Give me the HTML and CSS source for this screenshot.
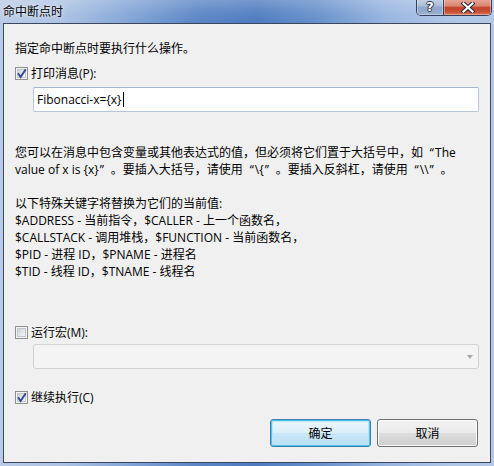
FILE: index.html
```html
<!DOCTYPE html>
<html lang="zh-CN">
<head>
<meta charset="utf-8">
<title>命中断点时</title>
<link rel="stylesheet" href="styles.css">
</head>
<body>
<div class="window">
  <div class="titlebar">
    <span class="title">命中断点时</span>
    <div class="caption-btns">
      <div class="cbtn help"><span class="qmark">?</span></div>
      <div class="cbtn close">
        <svg width="14" height="11" viewBox="0 0 14 11">
          <path d="M2.5 1.5 L11.5 9.5 M11.5 1.5 L2.5 9.5" stroke="#23283a" stroke-width="4.2" stroke-linecap="square" fill="none"/>
          <path d="M2.5 1.5 L11.5 9.5 M11.5 1.5 L2.5 9.5" stroke="#ffffff" stroke-width="2.2" stroke-linecap="square" fill="none"/>
        </svg>
      </div>
    </div>
  </div>
  <div class="client">
    <p class="intro">指定命中断点时要执行什么操作。</p>
    <div class="check-row row-print">
      <span class="cb checked"><svg viewBox="0 0 13 13" width="13" height="13"><path d="M3 6.3 L5.6 10 L10.8 2.2" stroke="#34489a" stroke-width="1.9" fill="none"/></svg></span>
      <span class="check-label">打印消息(P):</span>
    </div>
    <div class="textbox">Fibonacci-x={x}<span class="caret"></span></div>
    <p class="help-text">您可以在消息中包含变量或其他表达式的值，但必须将它们置于大括号中，如<span class="qo">“</span>The<br>value of x is {x}<span class="qc">”</span>。要插入大括号，请使用<span class="qo">“</span>\{<span class="qc">”</span>。要插入反斜杠，请使用<span class="qo">“</span>\\<span class="qc">”</span>。<br><br>以下特殊关键字将替换为它们的当前值:<br>$ADDRESS - 当前指令，$CALLER - 上一个函数名，<br>$CALLSTACK - 调用堆栈，$FUNCTION - 当前函数名，<br>$PID - 进程 ID，$PNAME - 进程名<br>$TID - 线程 ID，$TNAME - 线程名</p>
    <div class="check-row row-macro">
      <span class="cb"></span>
      <span class="check-label">运行宏(M):</span>
    </div>
    <div class="combo"><span class="arrow"></span></div>
    <div class="check-row row-continue">
      <span class="cb checked"><svg viewBox="0 0 13 13" width="13" height="13"><path d="M3 6.3 L5.6 10 L10.8 2.2" stroke="#34489a" stroke-width="1.9" fill="none"/></svg></span>
      <span class="check-label">继续执行(C)</span>
    </div>
    <div class="buttons">
      <button class="btn default">确定</button>
      <button class="btn">取消</button>
    </div>
  </div>
</div>
</body>
</html>
```
FILE: styles.css
```css
html, body {
  margin: 0;
  padding: 0;
}
body {
  width: 494px;
  height: 466px;
  overflow: hidden;
  font-family: "Segoe UI", "Open Sans", "Noto Sans CJK SC", sans-serif;
  font-size: 12px;
  color: #000;
}
.window {
  width: 494px;
  height: 466px;
  box-sizing: border-box;
  padding: 0 3px 3px 3px;
  display: flex;
  flex-direction: column;
  background:
    linear-gradient(180deg, rgba(255,255,255,0.22) 0px, rgba(255,255,255,0.05) 14px, rgba(255,255,255,0) 23px),
    linear-gradient(90deg, #b9cbe6 0%, #aec3e3 12%, #86a7d8 25%, #5b85c5 40%, #4f7bc0 52%, #6690ca 64%, #97b4df 78%, #aec5e6 90%, #b3c8e7 100%);
}
.titlebar {
  height: 23px;
  flex: none;
  display: flex;
  align-items: flex-start;
}
.title {
  margin-top: 2px;
  line-height: 17px;
  font-family: "Noto Sans CJK SC", sans-serif;
  text-shadow: 0 0 6px rgba(255,255,255,0.7), 0 0 2px rgba(255,255,255,0.6);
}
.caption-btns {
  margin-left: auto;
  margin-right: -1px;
  display: flex;
  height: 16px;
  margin-top: -1px;
  border: 1px solid #34405a;
  border-top: none;
  border-radius: 0 0 5px 5px;
  overflow: hidden;
}
.cbtn {
  height: 16px;
  box-sizing: border-box;
  display: flex;
  align-items: center;
  justify-content: center;
  box-shadow: inset 0 0 0 1px rgba(255,255,255,0.35);
}
.help {
  width: 27px;
  border-right: 1px solid #34405a;
  background: linear-gradient(180deg, #c6d3e7 0%, #aabbd6 45%, #8ea5c8 50%, #9ab0d1 100%);
}
.close {
  width: 47px;
  background: linear-gradient(180deg, #e7a99a 0%, #d98571 45%, #c6462f 50%, #c54a31 75%, #d8765c 100%);
}
.qmark {
  font-family: "DejaVu Sans", sans-serif;
  font-weight: bold;
  font-size: 13px;
  line-height: 13px;
  color: #fff;
  margin-top: -1px;
  text-shadow: 1px 0 0 #2a3048, -1px 0 0 #2a3048, 0 1px 0 #2a3048, 0 -1px 0 #2a3048;
}
.client {
  flex: 1;
  box-sizing: border-box;
  border: 1px solid #3a475f;
  background: #f0f0f0;
  padding: 16px 11px 0 11px;
  display: flex;
  flex-direction: column;
}
.intro {
  margin: 0;
  line-height: 17px;
}
.check-row {
  display: flex;
  align-items: center;
  height: 17px;
}
.row-print { margin-top: 8px; }
.row-macro { margin-top: 44px; }
.row-continue { margin-top: 20px; }
.cb {
  width: 13px;
  height: 13px;
  box-sizing: border-box;
  border: 1px solid #8e8f8f;
  background: #f4f4f4;
  position: relative;
  flex: none;
}
.cb::before {
  content: "";
  position: absolute;
  left: 1px;
  top: 1px;
  right: 1px;
  bottom: 1px;
  border: 1px solid #c3c6ca;
  background: linear-gradient(135deg, #cdd1d6 0%, #e4e6e8 55%, #f7f7f7 100%);
}
.cb svg {
  position: absolute;
  left: -1px;
  top: -1px;
}
.check-label {
  margin-left: 3px;
  line-height: 17px;
}
.textbox {
  margin: 5px 0 0 18px;
  height: 25px;
  box-sizing: border-box;
  background: #fff;
  border: 1px solid #b5c6da;
  border-top-color: #a3b3c8;
  border-radius: 2px;
  padding-left: 3px;
  display: flex;
  align-items: center;
  line-height: 17px;
}
.caret {
  display: inline-block;
  width: 1px;
  height: 15px;
  background: #000;
  margin-left: 1px;
}
.help-text {
  margin: 32px 0 0 0;
  line-height: 17px;
  white-space: nowrap;
}
.qo, .qc {
  display: inline-block;
  width: 12px;
  font-family: "Open Sans", sans-serif;
}
.qo {
  text-align: right;
  padding-right: 1px;
  box-sizing: border-box;
}
.qc {
  text-align: left;
  padding-left: 1px;
  box-sizing: border-box;
}
.combo {
  margin: 3px 0 0 18px;
  height: 25px;
  box-sizing: border-box;
  background: #f4f4f4;
  border: 1px solid #d3d3d3;
  border-radius: 3px;
  display: flex;
  align-items: center;
  justify-content: flex-end;
  padding-right: 5px;
}
.arrow {
  width: 0;
  height: 0;
  border-left: 3.5px solid transparent;
  border-right: 3.5px solid transparent;
  border-top: 4px solid #a8a8a8;
  margin-top: 1px;
}
.buttons {
  margin-top: 13px;
  margin-right: 1px;
  display: flex;
  justify-content: flex-end;
  gap: 6px;
}
.btn {
  width: 101px;
  height: 28px;
  box-sizing: border-box;
  font-family: "Segoe UI", "Open Sans", "Noto Sans CJK SC", sans-serif;
  font-size: 12px;
  color: #000;
  border: 1px solid #707070;
  border-radius: 3px;
  background: linear-gradient(180deg, #f2f2f2 0%, #ebebeb 50%, #dddddd 50%, #cfcfcf 100%);
  box-shadow: inset 0 0 0 1px #fbfbfb;
  padding: 0;
  margin: 0;
}
.btn.default {
  border-color: #3c7fb1;
  background: linear-gradient(180deg, #e9f5fc 0%, #dcf0fa 50%, #c9e7f7 50%, #bcdff3 100%);
  box-shadow: inset 0 0 0 1px #4fc3f0, inset 0 0 0 2px #b9e6f9;
}
```
